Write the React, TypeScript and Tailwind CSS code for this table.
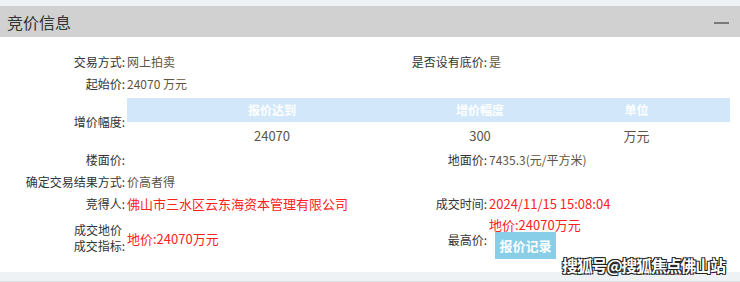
import React from "react";

const font = { fontFamily: '"Noto Sans CJK SC", "Noto Sans", sans-serif' };

function Label({ children }: { children: React.ReactNode }) {
  return <div className="text-right text-[#333] pr-[2px]">{children}</div>;
}

export default function App() {
  return (
    <div className="w-[740px] h-[282px] bg-[#eef2f5] relative overflow-hidden text-[12px] leading-[16px]" style={font}>
      <div className="h-[6px]" />
      <div className="h-[31px] bg-[#d1d1d1] flex items-center justify-between pl-[7px] pr-[11px]">
        <span className="text-[16px] text-[#333] leading-[20px]">竞价信息</span>
        <span className="block w-[15px] h-[2px] bg-[#7a7a7a] mt-[2px]" />
      </div>
      <div className="bg-white h-[235px] pt-[14px] pr-[10px]">
        <div className="grid grid-cols-[127px_240px_122px_1fr] items-center">
          {/* row 1 */}
          <Label>交易方式:</Label>
          <div className="h-[22px] flex items-center text-[#5e5442]">网上拍卖</div>
          <Label>是否设有底价:</Label>
          <div className="text-[#5e5442]">是</div>
          {/* row 2 */}
          <Label>起始价:</Label>
          <div className="h-[22px] flex items-center text-[#5e5442]">24070 万元</div>
          <div />
          <div />
          {/* table */}
          <Label>增价幅度:</Label>
          <div className="col-span-3 mt-[3px]">
            <div className="grid grid-cols-[290px_126px_1fr] bg-[#d2e8fa] h-[24px] items-center text-white font-bold text-center">
              <div>报价达到</div>
              <div>增价幅度</div>
              <div>单位</div>
            </div>
            <div className="grid grid-cols-[290px_126px_1fr] h-[27px] items-center text-center text-[#5e5442] text-[13px]">
              <div>24070</div>
              <div>300</div>
              <div>万元</div>
            </div>
          </div>
          {/* 楼面价 */}
          <Label>楼面价:</Label>
          <div className="h-[22px]" />
          <Label>地面价:</Label>
          <div className="text-[#5e5442]">7435.3(元/平方米)</div>
          {/* 确定 */}
          <Label>确定交易结果方式:</Label>
          <div className="h-[22px] flex items-center text-[#5e5442]">价高者得</div>
          <div />
          <div />
          {/* 竞得人 */}
          <Label>竞得人:</Label>
          <div className="h-[22px] flex items-center text-[#ff2020] text-[13px] whitespace-nowrap">佛山市三水区云东海资本管理有限公司</div>
          <Label>成交时间:</Label>
          <div className="text-[#ff2020] text-[13px]">2024/11/15 15:08:04</div>
          {/* last row */}
          <div className="self-start text-right text-[#333] pr-[2px] leading-[16px] pt-[7px]">
            <div className="pr-[3px]">成交地价</div>
            <div>成交指标:</div>
          </div>
          <div className="self-start text-[#ff2020] text-[13px] leading-[16px] pt-[16px]">地价:24070万元</div>
          <div className="self-start pt-[17px]"><Label>最高价:</Label></div>
          <div className="self-start pt-[3px]">
            <div className="text-[#ff2020] text-[13px] leading-[14px]">地价:24070万元</div>
            <div className="ml-[6px] w-[61px] h-[27px] bg-[#88cee9] text-white font-bold text-[13px] flex items-center justify-center">报价记录</div>
          </div>
        </div>
      </div>
      <div className="h-[9px]" />
      <div className="h-[1px] bg-[#dcdfe2]" />
      <div
        className="absolute left-[562px] top-[255px] text-[16px] font-bold text-white leading-[20px] whitespace-nowrap tracking-[-1.2px]"
        style={{ textShadow: "1px 1px 0 #222, -1px -1px 0 #222, 1px -1px 0 #222, -1px 1px 0 #222" }}
      >
        搜狐号@搜狐焦点佛山站
      </div>
    </div>
  );
}
